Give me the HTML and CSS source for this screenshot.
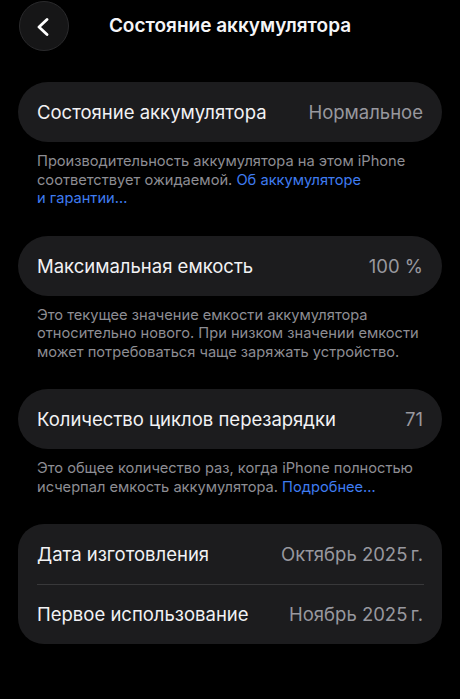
FILE: index.html
```html
<!DOCTYPE html>
<html lang="ru">
<head>
<meta charset="utf-8">
<title>Состояние аккумулятора</title>
<link rel="stylesheet" href="styles.css">
</head>
<body>
<div class="page">
  <header class="nav">
    <button class="back" aria-label="Назад">
      <svg width="14" height="18" viewBox="0 0 14 18"><path d="M11 1.5 L3 9 L11 16.5" fill="none" stroke="#fff" stroke-width="2.8" stroke-linecap="round" stroke-linejoin="round"/></svg>
    </button>
    <h1 class="title">Состояние аккумулятора</h1>
    <span class="spacer"></span>
  </header>

  <section class="section first">
    <div class="card">
      <div class="row"><span class="label">Состояние аккумулятора</span><span class="value">Нормальное</span></div>
    </div>
    <p class="note">Производительность аккумулятора на этом iPhone<br>соответствует ожидаемой. <a class="link">Об аккумуляторе</a><br><a class="link">и гарантии…</a></p>
  </section>

  <section class="section">
    <div class="card">
      <div class="row"><span class="label">Максимальная емкость</span><span class="value">100 %</span></div>
    </div>
    <p class="note">Это текущее значение емкости аккумулятора относительно нового. При низком значении емкости может потребоваться чаще заряжать устройство.</p>
  </section>

  <section class="section">
    <div class="card">
      <div class="row"><span class="label">Количество циклов перезарядки</span><span class="value">71</span></div>
    </div>
    <p class="note">Это общее количество раз, когда iPhone полностью<br>исчерпал емкость аккумулятора. <a class="link">Подробнее…</a></p>
  </section>

  <section class="section">
    <div class="card group">
      <div class="row"><span class="label">Дата изготовления</span><span class="value">Октябрь 2025&#8239;г.</span></div>
      <div class="row"><span class="label">Первое использование</span><span class="value">Ноябрь 2025&#8239;г.</span></div>
    </div>
  </section>
</div>
</body>
</html>
```

FILE: styles.css
```css
* { box-sizing: border-box; }
html, body {
  margin: 0;
  padding: 0;
  background: #000;
}
body {
  font-family: Inter, "Noto Sans", "DejaVu Sans", sans-serif;
  color: #f2f2f4;
  -webkit-font-smoothing: antialiased;
}
.page {
  padding: 0 18px;
  display: flex;
  flex-direction: column;
}
.nav {
  height: 51px;
  display: grid;
  grid-template-columns: 51px 1fr 51px;
  align-items: center;
}
.back {
  width: 50px;
  height: 50px;
  border-radius: 50%;
  background: #161617;
  border: 1px solid #2a2a2c;
  padding: 0;
  margin: 0 0 0 1px;
  display: flex;
  align-items: center;
  justify-content: center;
}
.back svg { margin-left: -2px; margin-top: 2px; }
.title {
  margin: 0;
  text-align: center;
  font-size: 19px;
  font-weight: 600;
  letter-spacing: 0;
  color: #f5f5f7;
}
.section {
  margin-bottom: 28px;
}
.section.first { margin-top: 31px; }
.card {
  background: #1c1c1e;
  border-radius: 30px;
}
.card.group { border-radius: 26px; }
.row {
  height: 60px;
  display: flex;
  align-items: center;
  justify-content: space-between;
  padding: 0 19px;
  font-size: 18.5px;
  letter-spacing: 0;
}
.group .row + .row {
  position: relative;
}
.group .row + .row::before {
  content: "";
  position: absolute;
  left: 19px;
  right: 18px;
  top: 0;
  height: 1px;
  background: #38383a;
}
.label { color: #f2f2f4; }
.value { color: #98989e; }
.note {
  margin: 0;
  padding: 10px 19px 0;
  font-size: 14.65px;
  line-height: 18.5px;
  letter-spacing: 0;
  color: #8d8d93;
}
.link { color: #3f7cf0; }
```
